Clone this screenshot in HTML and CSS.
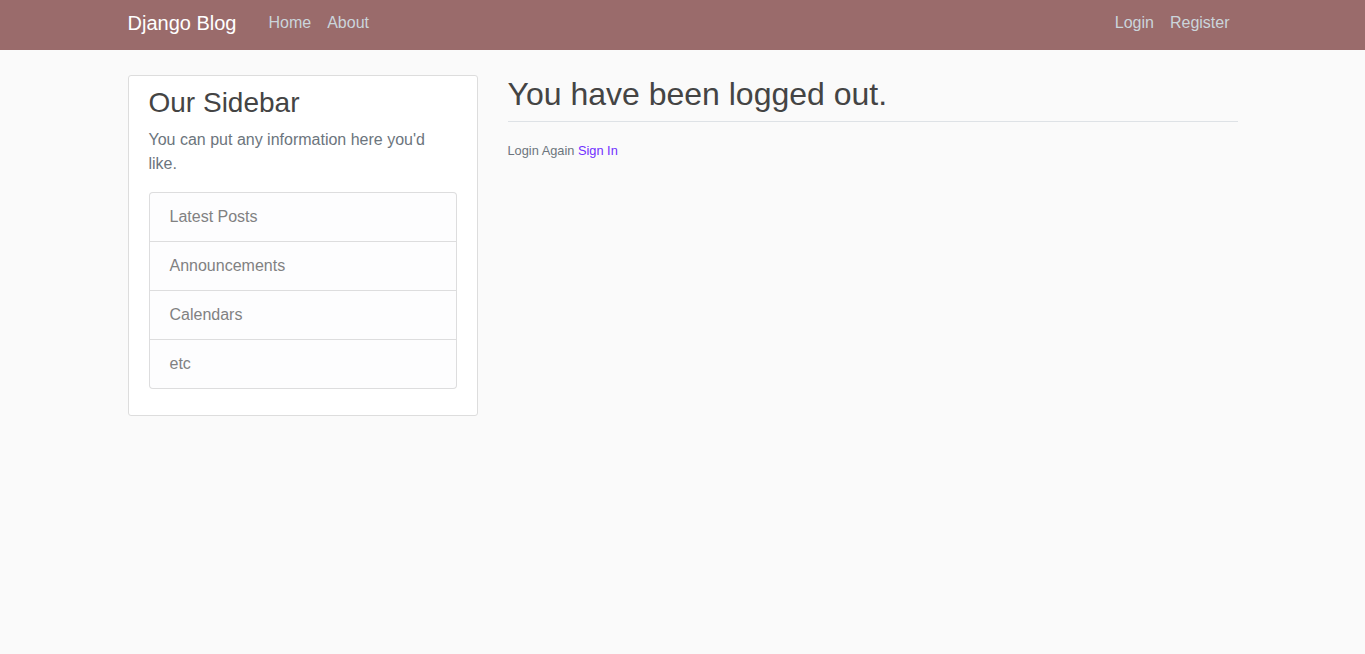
FILE: index.html
```html
<!DOCTYPE html>
<html lang="en">
<head>
<meta charset="utf-8">
<title>Django Blog</title>
<link rel="stylesheet" href="styles.css">
</head>
<body>
<header class="site-header">
  <nav class="navbar">
    <div class="container nav-inner">
      <a class="brand" href="#">Django Blog</a>
      <div class="nav-group">
        <a class="nav-link" href="#">Home</a>
        <a class="nav-link" href="#">About</a>
      </div>
      <div class="nav-group nav-right">
        <a class="nav-link" href="#">Login</a>
        <a class="nav-link" href="#">Register</a>
      </div>
    </div>
  </nav>
</header>
<main class="container main-row">
  <aside class="col-side">
    <div class="content-section">
      <h3 class="side-title">Our Sidebar</h3>
      <p class="text-muted side-text">You can put any information here you'd like.</p>
      <ul class="list-group">
        <li class="list-group-item">Latest Posts</li>
        <li class="list-group-item">Announcements</li>
        <li class="list-group-item">Calendars</li>
        <li class="list-group-item">etc</li>
      </ul>
    </div>
  </aside>
  <section class="col-main">
    <div class="title-wrap">
      <h2 class="page-title">You have been logged out.</h2>
    </div>
    <div class="login-again">
      <small class="text-muted">Login Again <a class="signin" href="#">Sign In</a></small>
    </div>
  </section>
</main>
</body>
</html>
```
FILE: styles.css
```css
* { box-sizing: border-box; }

html, body {
  margin: 0;
  padding: 0;
}

body {
  background: #fafafa;
  color: #333333;
  font-family: "Liberation Sans", Arial, Helvetica, sans-serif;
  font-size: 16px;
  line-height: 1.5;
}

a { text-decoration: none; }

.container {
  width: 1140px;
  margin: 0 auto;
  padding: 0 15px;
}

.navbar {
  background: #9a6b6b;
  height: 50px;
  padding-top: 8px;
}

.nav-inner {
  display: flex;
  align-items: flex-start;
}

.brand {
  color: #ffffff;
  font-size: 20px;
  line-height: 30px;
  margin-right: 24px;
}

.nav-group {
  display: flex;
  padding-top: 3px;
}

.nav-right {
  margin-left: auto;
}

.nav-link {
  color: #cbd5db;
  font-size: 16px;
  line-height: 24px;
  padding: 0 8px;
}

.main-row {
  display: flex;
  padding-top: 25px;
}

.col-side {
  width: 380px;
  padding-right: 30px;
  flex: none;
}

.col-main {
  flex: 1;
  padding: 0;
}

.content-section {
  background: #ffffff;
  padding: 10px 20px;
  border: 1px solid #dddddd;
  border-radius: 3px;
  margin-bottom: 20px;
}

.side-title {
  color: #444444;
  font-size: 28px;
  font-weight: 400;
  line-height: 1.2;
  margin: 0 0 8px;
}

.text-muted { color: #6c757d; }

.side-text {
  margin: 0 0 16px;
}

.list-group {
  list-style: none;
  margin: 0 0 16px;
  padding: 0;
  border-radius: 4px;
}

.list-group-item {
  background: #fdfdfe;
  color: #818182;
  padding: 12px 20px;
  border: 1px solid rgba(0, 0, 0, 0.125);
  margin-bottom: -1px;
}

.list-group-item:first-child {
  border-top-left-radius: 4px;
  border-top-right-radius: 4px;
}

.list-group-item:last-child {
  margin-bottom: 0;
  border-bottom-left-radius: 4px;
  border-bottom-right-radius: 4px;
}

.title-wrap {
  border-bottom: 1px solid #dee2e6;
}

.page-title {
  color: #444444;
  font-size: 32px;
  font-weight: 400;
  line-height: 1.2;
  margin: 0 0 8px;
}

.login-again {
  margin-top: 19px;
  font-size: 12.8px;
  line-height: 1.5;
}

.login-again small { font-size: 12.8px; }

.signin {
  color: #7030ff;
}
```
